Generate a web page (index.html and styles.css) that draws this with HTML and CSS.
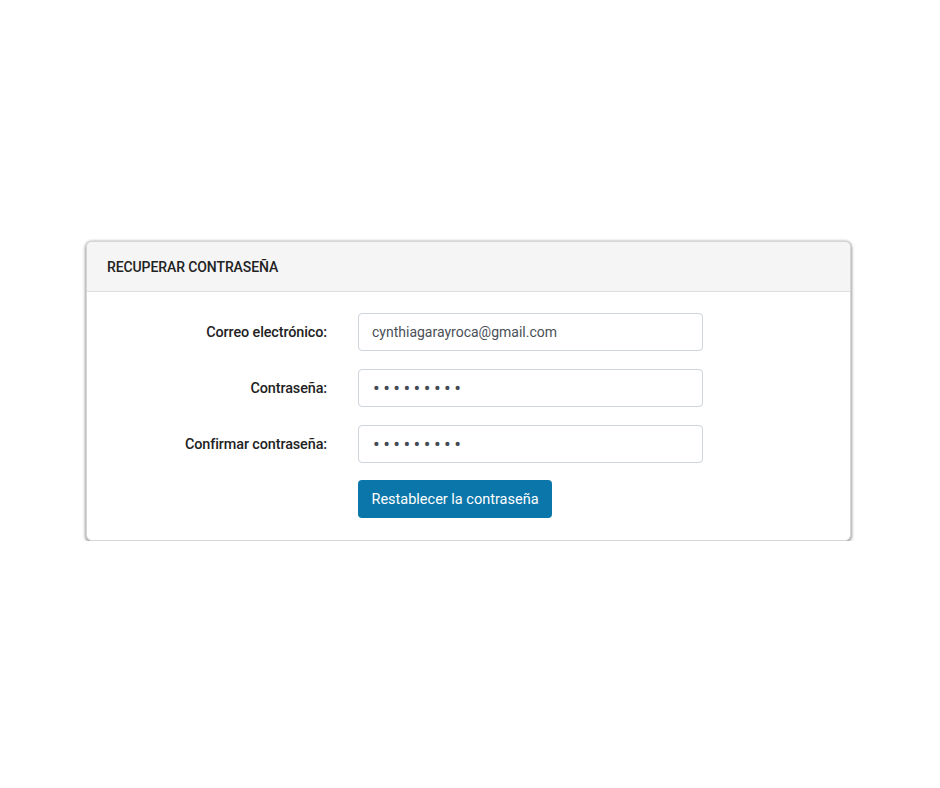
FILE: index.html
```html
<!DOCTYPE html>
<html lang="es">
<head>
<meta charset="utf-8">
<title>Recuperar contraseña</title>
<link rel="stylesheet" href="styles.css">
</head>
<body>
<div class="page">
  <div class="card">
    <div class="card-header">RECUPERAR CONTRASEÑA</div>
    <form class="card-body">
      <div class="row">
        <label class="label" for="email">Correo electrónico:</label>
        <input class="input" id="email" type="email" value="cynthiagarayroca@gmail.com">
      </div>
      <div class="row">
        <label class="label" for="pw">Contraseña:</label>
        <input class="input pw" id="pw" type="password" value="123456789">
      </div>
      <div class="row">
        <label class="label" for="pw2">Confirmar contraseña:</label>
        <input class="input pw" id="pw2" type="password" value="123456789">
      </div>
      <div class="row actions">
        <span class="label"></span>
        <button class="btn" type="button">Restablecer la contraseña</button>
      </div>
    </form>
  </div>
</div>
</body>
</html>
```

FILE: styles.css
```css
html, body {
  margin: 0;
  padding: 0;
  background: #fff;
}
body {
  font-family: Roboto, "Liberation Sans", Arial, sans-serif;
  color: #212529;
}
.page {
  padding: 241px 0 0 86px;
}
.card {
  width: 765px;
  box-sizing: border-box;
  border: 1px solid #d6d6d6;
  border-radius: 6px;
  box-shadow: 0 1px 3px 1px rgba(0,0,0,0.38);
  background: #fff;
  overflow: hidden;
}
.card-header {
  height: 50px;
  box-sizing: border-box;
  padding: 0 20px;
  display: flex;
  align-items: center;
  background: #f5f5f5;
  border-bottom: 1px solid #dedede;
  font-size: 14px;
  font-weight: 500;
  color: #222;
  letter-spacing: -0.1px;
}
.card-body {
  padding: 21px 0 22px 0;
  display: flex;
  flex-direction: column;
  gap: 18px;
  margin: 0;
}
.row {
  display: flex;
  align-items: center;
  gap: 31px;
}
.actions {
  margin-top: -1px;
}
.label {
  width: 240px;
  text-align: right;
  font-size: 14.4px;
  font-weight: 500;
  color: #222;
  letter-spacing: -0.1px;
}
.input {
  width: 345px;
  height: 38px;
  box-sizing: border-box;
  border: 1px solid #ced4da;
  border-radius: 4px;
  padding: 0 13px;
  font-family: Roboto, "Liberation Sans", Arial, sans-serif;
  font-size: 14px;
  color: #4a5058;
  background: #fff;
  outline: none;
}
.pw {
  letter-spacing: 3.4px;
  font-size: 20px;
  padding-left: 14px;
  color: #444b55;
}
.btn {
  width: 194px;
  height: 38px;
  border: none;
  border-radius: 4px;
  background: #0b76a9;
  color: #fff;
  font-family: Roboto, "Liberation Sans", Arial, sans-serif;
  font-size: 14.5px;
  font-weight: 400;
  cursor: pointer;
  padding: 0;
}
```
